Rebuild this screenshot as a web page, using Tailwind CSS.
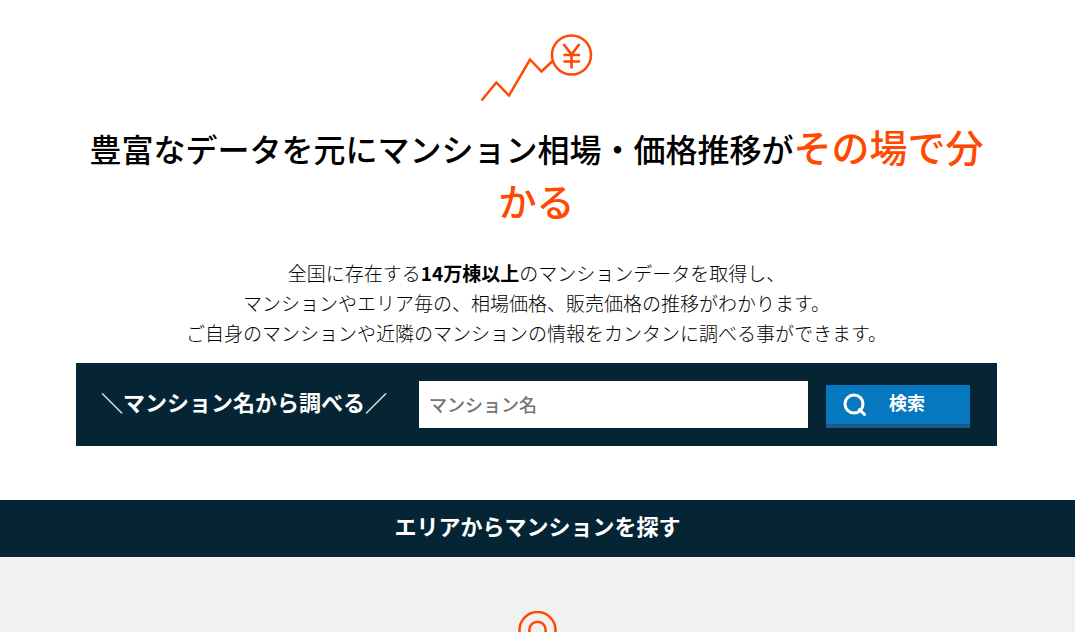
<!DOCTYPE html>
<html lang="ja">
<head>
<meta charset="utf-8">
<meta name="viewport" content="width=device-width, initial-scale=1">
<title>マンション相場・価格推移</title>
<script src="https://cdn.jsdelivr.net/npm/@tailwindcss/browser@4"></script>
</head>
<body class="flex min-h-screen flex-col bg-white font-['Noto_Sans_CJK_JP',sans-serif] text-black">
  <section class="pt-[33px] pr-[78px] pb-[54px] pl-[76px]">
    <svg class="mx-auto block h-[70px] w-[114px]" viewBox="0 0 114 70" fill="none" stroke="#ff4800" stroke-width="2.5" aria-hidden="true">
      <path d="M1.500 67.500 16.300 49.500 29 62.500 50 26.500 61.500 38.500 72 28.500"/>
      <circle cx="91.500" cy="22" r="19.500"/>
      <path d="M83.500 11 91.500 21.500 99.500 11M91.500 21v14.500M83.500 22h16.500M83.500 28.500h16.500" stroke-width="2.600"/>
    </svg>
    <h1 class="mt-[17px] text-center text-[32px] leading-[51px] font-medium">豊富なデータを元にマンション相場・価格推移が<span class="text-[38px] text-[#ff4800]">その場で分かる</span></h1>
    <p class="mt-[30px] text-center text-[19px] leading-[30px] font-light">全国に存在する<b class="font-bold">14万棟以上</b>のマンションデータを取得し、<br>マンションやエリア毎の、相場価格、販売価格の推移がわかります。<br>ご自身のマンションや近隣のマンションの情報をカンタンに調べる事ができます。</p>
    <form class="mt-[15px] flex items-end bg-[#052535] py-[18px] pr-[27px] pl-[25px]">
      <label for="name" class="mr-8 shrink-0 self-center pb-2 text-[22px] leading-8 font-bold text-white">＼マンション名から調べる／</label>
      <input id="name" type="text" placeholder="マンション名" class="h-[47px] min-w-0 flex-1 bg-white px-[10px] pb-[2px] text-[18px] font-medium outline-none placeholder:text-[#757575]">
      <button type="button" class="ml-[18px] flex h-[43px] w-36 shrink-0 items-center border-b-4 border-[#1b5986] bg-[#0578c0] pl-[17px] text-[18px] font-bold text-white">
        <svg class="mr-[22px] size-6" viewBox="0 0 24 24" fill="none" stroke="#fff" stroke-width="3" stroke-linecap="round" aria-hidden="true"><circle cx="11" cy="11" r="9"/><path d="m16.500 16.500 5 5"/></svg>
        <span class="pb-1">検索</span>
      </button>
    </form>
  </section>
  <h2 class="bg-[#052535] pb-[6px] text-center text-[22px] leading-[51px] font-bold text-white">エリアからマンションを探す</h2>
  <section class="flex-1 bg-[#f1f1f1] pt-[54px]">
    <svg class="mx-auto block h-[21px] w-[40px]" viewBox="0 0 40 21" fill="none" stroke="#ff4800" stroke-width="2.500" aria-hidden="true"><circle cx="19.500" cy="19" r="18"/><circle cx="19.500" cy="19" r="8.200"/></svg>
  </section>
</body>
</html>
